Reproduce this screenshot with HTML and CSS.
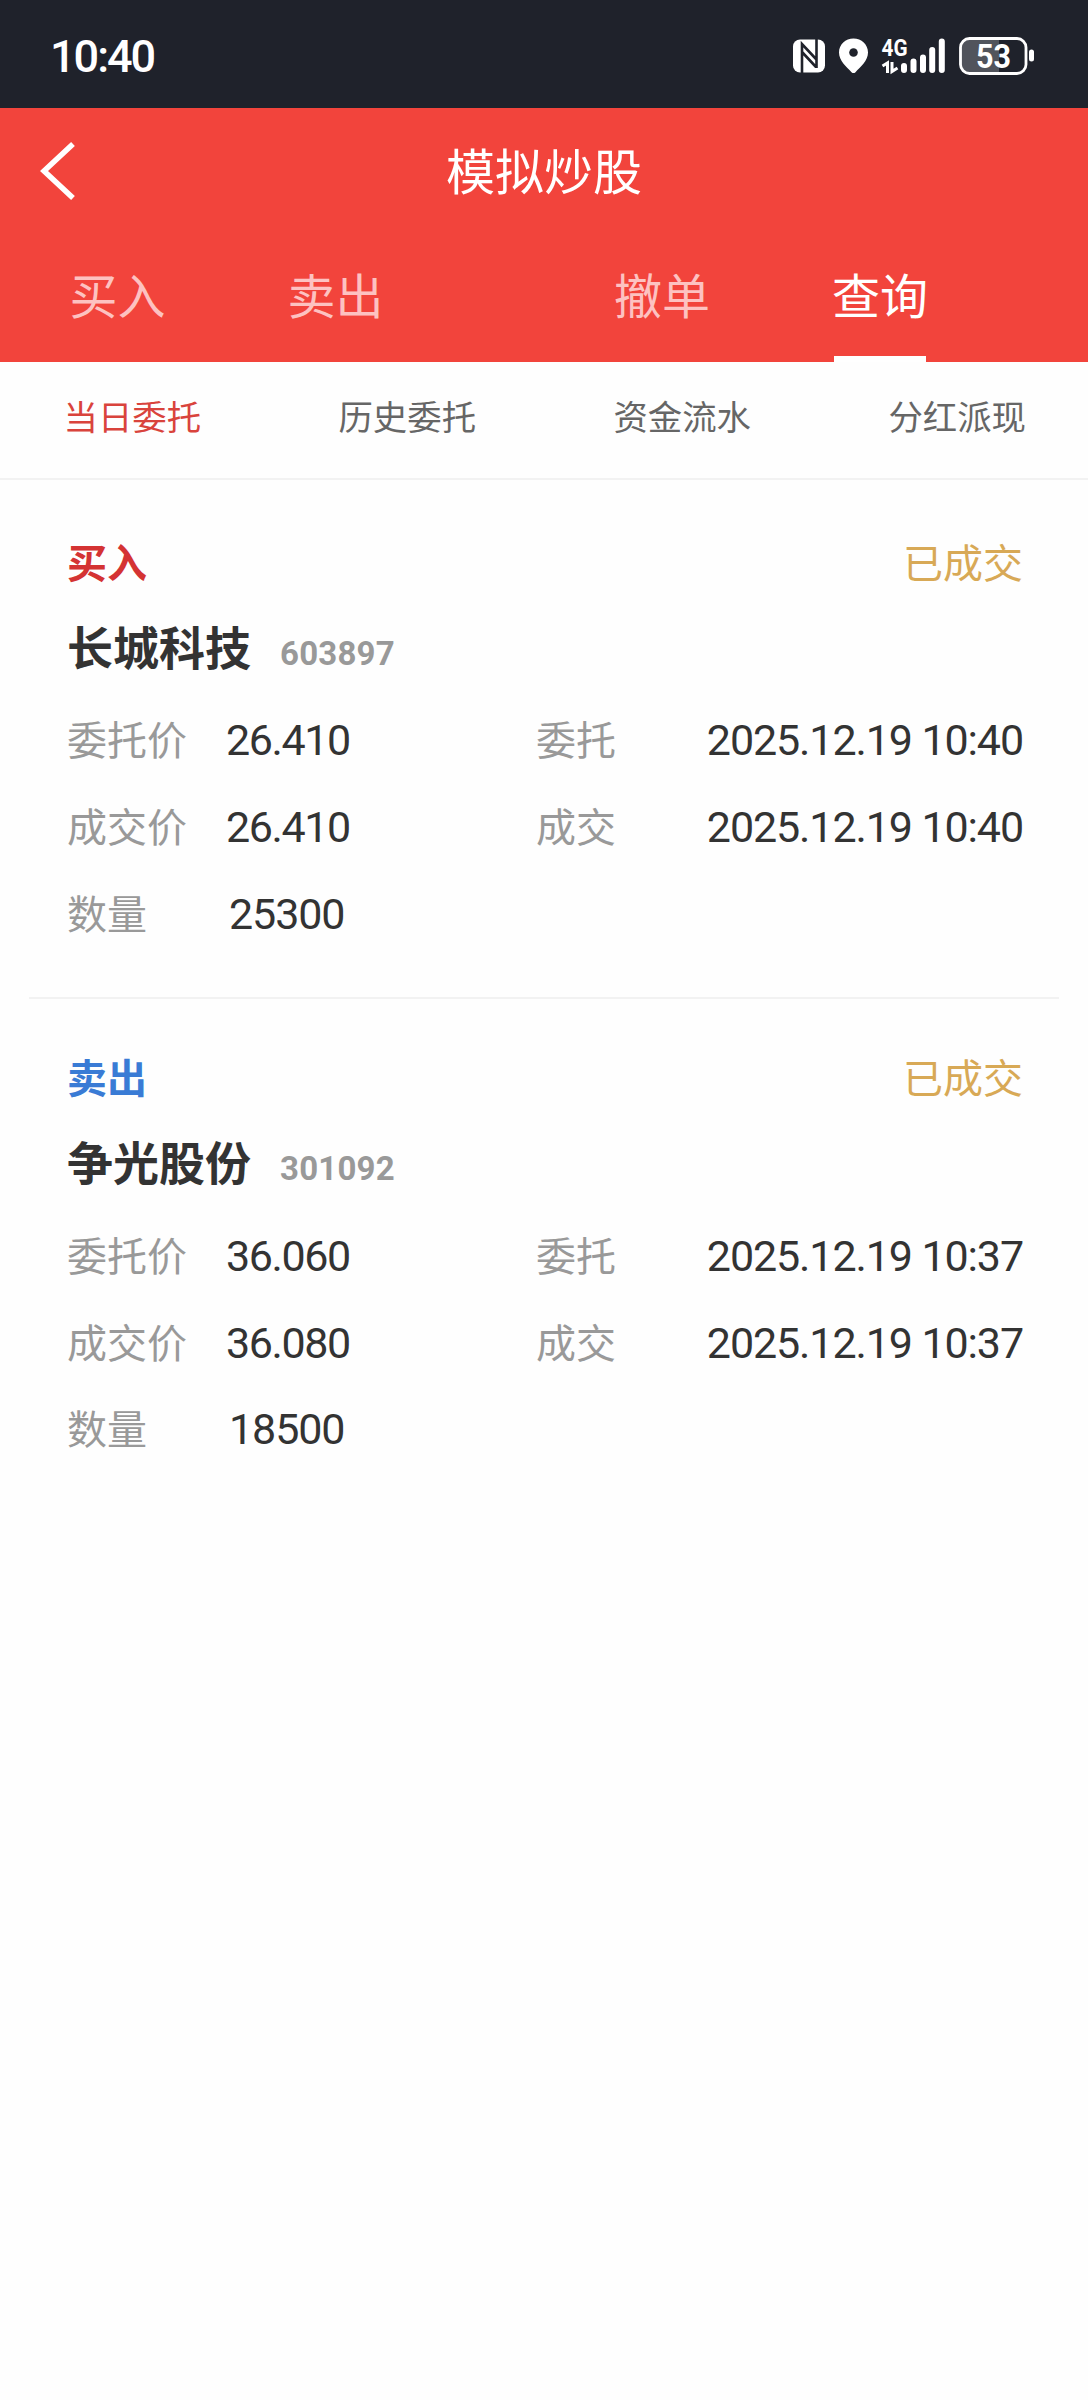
FILE: index.html
```html
<!DOCTYPE html>
<html lang="zh-CN">
<head>
<meta charset="utf-8">
<title>模拟炒股</title>
<link rel="stylesheet" href="styles.css">
</head>
<body>
<div class="status-bar">
  <span class="clock">10:40</span>
  <svg class="status-icons" viewBox="0 0 250 48" width="250" height="48">
    <rect x="8" y="7.5" width="32" height="33" rx="7" fill="#fff"/>
    <path d="M17 41V12L31 27M17 20L31 35M31.500 7V36" fill="none" stroke="#1f222b" stroke-width="2.600"/>
    <path d="M68.500 6.500C60.500 6.500 54 12.500 54 20.500C54 29 61.500 34.500 66.500 40.200Q68.500 42 70.500 40.200C75.500 34.500 83 29 83 20.500C83 12.500 76.500 6.500 68.500 6.500Z" fill="#fff"/>
    <circle cx="68.500" cy="20.500" r="4.300" fill="#1f222b"/>
    <text class="net" x="96.500" y="24" textLength="26" lengthAdjust="spacingAndGlyphs">4G</text>
    <path d="M97.500 34L102.500 31V41M107 30V39.500L112.500 36" fill="none" stroke="#fff" stroke-width="3"/>
    <g stroke="#fff" stroke-width="6" stroke-linecap="round">
      <path d="M119 34V38M128.500 29.500V38M138 25.500V38M147.200 18V38M156.800 9.500V38"/>
    </g>
    <path d="M184 8H214V40H184Q176 40 176 32V16Q176 8 184 8Z" fill="#51545c"/>
    <rect x="175.500" y="6.500" width="65.500" height="35" rx="9" fill="none" stroke="#fff" stroke-width="2.800"/>
    <rect x="244" y="17.500" width="5" height="12" rx="2.500" fill="#fff"/>
    <text class="level" x="191" y="36" textLength="35" lengthAdjust="spacingAndGlyphs">53</text>
  </svg>
</div>
<header class="header">
  <div class="title-bar">
    <svg class="back" viewBox="0 0 36 60" width="36" height="60"><path d="M33 3L4 30L33 57" fill="none" stroke="#fff" stroke-width="5.500"/></svg>
    <h1 class="title">模拟炒股</h1>
  </div>
  <nav class="tabs">
    <a class="tab">买入</a>
    <a class="tab">卖出</a>
    <a class="tab tab-wide">撤单</a>
    <a class="tab active">查询</a>
  </nav>
</header>
<nav class="subtabs">
  <a class="subtab active">当日委托</a>
  <a class="subtab">历史委托</a>
  <a class="subtab">资金流水</a>
  <a class="subtab">分红派现</a>
</nav>
<main class="orders">
  <section class="order">
    <div class="order-head"><span class="side buy">买入</span><span class="state">已成交</span></div>
    <div class="stock"><span class="name">长城科技</span><span class="code">603897</span></div>
    <div class="row"><span class="label">委托价</span><span class="value">26.410</span><span class="label">委托</span><span class="time">2025.12.19 10:40</span></div>
    <div class="row"><span class="label">成交价</span><span class="value">26.410</span><span class="label">成交</span><span class="time">2025.12.19 10:40</span></div>
    <div class="row"><span class="label">数量</span><span class="value qty">25300</span></div>
  </section>
  <section class="order">
    <div class="order-head"><span class="side sell">卖出</span><span class="state">已成交</span></div>
    <div class="stock"><span class="name">争光股份</span><span class="code">301092</span></div>
    <div class="row"><span class="label">委托价</span><span class="value">36.060</span><span class="label">委托</span><span class="time">2025.12.19 10:37</span></div>
    <div class="row"><span class="label">成交价</span><span class="value">36.080</span><span class="label">成交</span><span class="time">2025.12.19 10:37</span></div>
    <div class="row"><span class="label">数量</span><span class="value qty">18500</span></div>
  </section>
</main>
</body>
</html>
```
FILE: styles.css
```css
* { box-sizing: border-box; }
body {
  margin: 0;
  min-height: 2400px;
  background: #fefefe;
  color: #333;
  font-family: "Noto Sans CJK SC", sans-serif;
}
.status-bar {
  display: flex;
  justify-content: space-between;
  align-items: center;
  height: 108px;
  padding: 4px 53px 0 50px;
  background: #1f222b;
  color: #fff;
}
.clock {
  padding-top: 2px;
  font: 500 45px/60px Roboto, sans-serif;
  letter-spacing: -2px;
}
.net { font: 700 24px Roboto, sans-serif; fill: #fff; }
.level { font: 700 34px Roboto, sans-serif; fill: #fff; }
.header { height: 254px; background: #f2443c; color: #fff; }
.title-bar {
  display: grid;
  grid-template-columns: 36px 1fr 36px;
  align-items: center;
  height: 126px;
  padding: 0 40px;
}
.title {
  margin: 0;
  padding-bottom: 5px;
  font-size: 49px;
  font-weight: 400;
  line-height: 60px;
  text-align: center;
}
.tabs { display: flex; height: 128px; padding-left: 69.500px; }
.tab {
  width: 96px;
  margin-right: 122px;
  padding-top: 27px;
  font-size: 48px;
  line-height: 64px;
  color: #fdc2c1;
}
.tab:nth-child(2) { margin-right: 230.500px; }
.tab.active {
  color: #fff;
  background: linear-gradient(#fff, #fff) 2px 100% / 92px 6px no-repeat;
}
.subtabs {
  display: flex;
  justify-content: space-between;
  height: 118px;
  padding: 28px 62px 0 63.500px;
  border-bottom: 2px solid #f2f2f2;
  font-size: 34.400px;
  line-height: 50px;
  color: #666;
}
.subtab.active { color: #d9433c; }
.orders { padding: 3.500px 29px 0; }
.order { height: 515.500px; padding: 49px 36px 0 38px; }
.order:first-child { border-bottom: 2px solid #f2f2f2; }
.order-head {
  display: flex;
  justify-content: space-between;
  height: 84px;
  font-size: 40px;
  line-height: 57px;
}
.side { font-weight: 700; }
.buy { color: #d43333; }
.sell { color: #397bd5; }
.state { color: #d8a956; }
.stock { display: flex; align-items: baseline; height: 80.500px; line-height: 57px; }
.name { width: 213px; font-size: 46px; font-weight: 700; }
.code {
  font-family: Roboto, sans-serif;
  font-size: 33px;
  font-weight: 700;
  letter-spacing: 0.2px;
  color: #999;
}
.row {
  display: grid;
  grid-template-columns: 159px 310px 120px 1fr;
  align-items: center;
  height: 86.700px;
}
.label { padding-bottom: 4px; font-size: 40px; line-height: 56px; color: #999; }
.value, .time {
  font-family: Roboto, sans-serif;
  font-size: 43px;
  line-height: 56px;
  letter-spacing: -1.400px;
  white-space: nowrap;
}
.qty { padding-left: 3px; letter-spacing: -1.100px; }
.time { text-align: right; letter-spacing: -1.100px; }
```
